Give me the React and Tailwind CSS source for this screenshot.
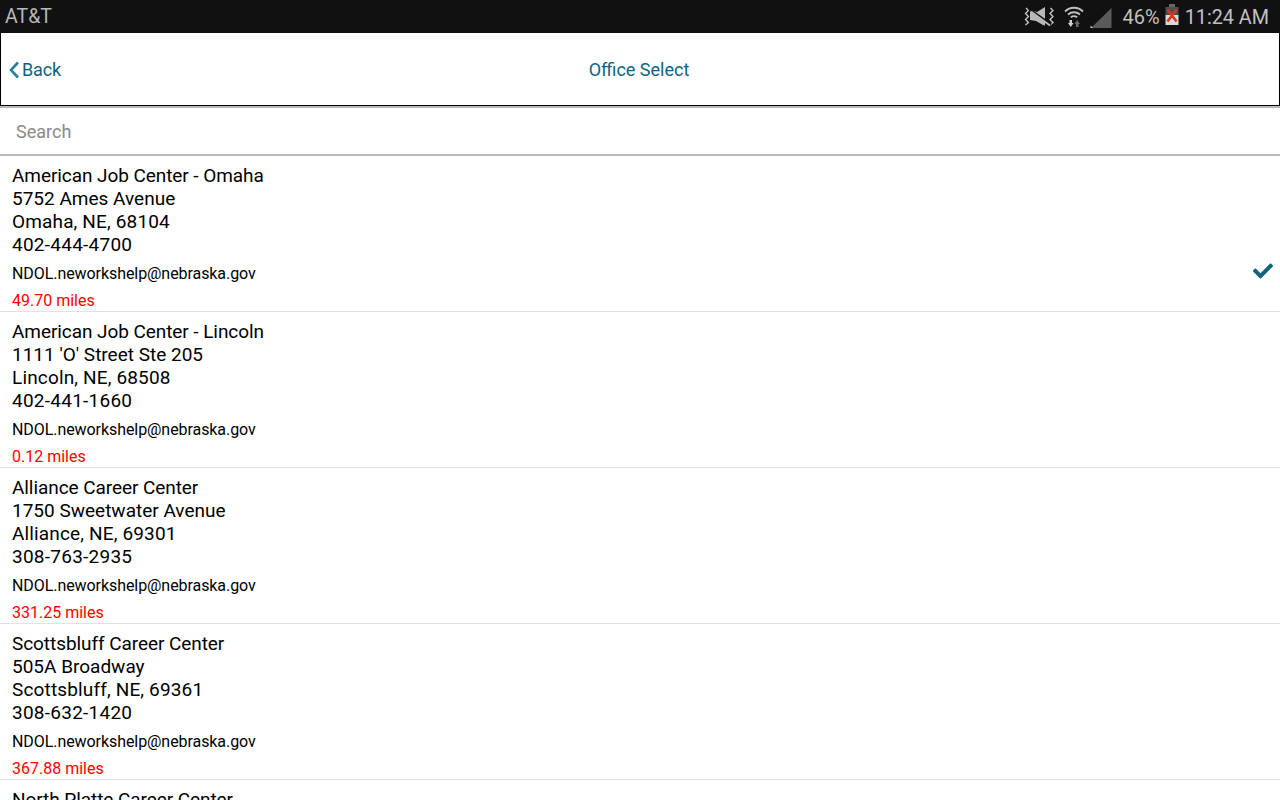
import React from 'react';
import { FaCheck } from 'react-icons/fa';

const offices = [
  { name: 'American Job Center - Omaha', street: '5752 Ames Avenue', city: 'Omaha, NE, 68104', phone: '402-444-4700', miles: '49.70 miles', selected: true },
  { name: 'American Job Center - Lincoln', street: "1111 'O' Street Ste 205", city: 'Lincoln, NE, 68508', phone: '402-441-1660', miles: '0.12 miles' },
  { name: 'Alliance Career Center', street: '1750 Sweetwater Avenue', city: 'Alliance, NE, 69301', phone: '308-763-2935', miles: '331.25 miles' },
  { name: 'Scottsbluff Career Center', street: '505A Broadway', city: 'Scottsbluff, NE, 69361', phone: '308-632-1420', miles: '367.88 miles' },
  { name: 'North Platte Career Center', street: '306 East 3rd Street', city: 'North Platte, NE, 69101', phone: '308-535-8320', miles: '223.40 miles' },
];

const StatusIcons = () => (
  <div className="flex items-center">
    {/* vibrate / mute */}
    <svg width="32" height="22" viewBox="0 0 32 22" className="shrink-0 mr-[9px]">
      <path d="M3 2l2.500 2.500-3 3 3 3-3 3 3 3-3 2.500" fill="none" stroke="#c8c8c8" strokeWidth="1.300" />
      <path d="M27.500 2l2.500 2.500-3 3 3 3-3 3 3 3-3 2.500" fill="none" stroke="#c8c8c8" strokeWidth="1.300" />
      <path d="M7 4l7 2 8-5v18.500l-2-.5-7-4-6-1z" fill="#b8b8b8" />
      <path d="M6 3l22 15.500" stroke="#111111" strokeWidth="2.200" />
      <path d="M8 5.500l19 14" stroke="#b8b8b8" strokeWidth="1.800" />
    </svg>
    {/* wifi */}
    <svg width="20" height="22" viewBox="0 0 20 22" className="shrink-0 mr-[6px] mt-[1px]">
      <path d="M1 5.500C6 0.500 14 0.500 19 5.500" fill="none" stroke="#c0c0c0" strokeWidth="1.800" />
      <path d="M4 8.500C7.500 5.500 12.500 5.500 16 8.500" fill="none" stroke="#c0c0c0" strokeWidth="1.800" />
      <path d="M6.800 11.300C8.800 9.800 11.200 9.800 13.200 11.300" fill="none" stroke="#c0c0c0" strokeWidth="1.800" />
      <path d="M5.500 14h2.500v3h1.500L6.800 21 4 17h1.500z" fill="#d0d0d0" />
      <path d="M12 21v-3h-1.500L13.200 14l2.800 4h-1.500v3z" fill="#6a6a6a" />
    </svg>
    {/* signal */}
    <svg width="22" height="20" viewBox="0 0 22 20" className="shrink-0 mr-[11px] mt-[3px]">
      <path d="M21.500 0v20H1z" fill="#5a5a5a" />
      <path d="M0.500 20v-2.500L3 20z" fill="#d0d0d0" />
    </svg>
    <span className="text-[20px] text-[#c0c0c0] mr-[5px]">46%</span>
    {/* battery */}
    <svg width="14" height="22" viewBox="0 0 14 22" className="shrink-0 mr-[6px] mb-[3px]">
      <rect x="4" y="0" width="6" height="3" fill="#666666" />
      <rect x="0.500" y="3" width="13" height="8" fill="#4f4f4f" />
      <rect x="0.500" y="11" width="13" height="10" fill="#d8d8d8" />
      <path d="M2.500 5.500l9 12M11.500 5.500l-9 12" stroke="#d9341c" strokeWidth="2.500" />
    </svg>
    <span className="text-[19.8px] text-[#c0c0c0] pt-[2px]">11:24 AM</span>
  </div>
);

const OfficeRow = ({ office }) => (
  <li className="relative h-[156px] border-b border-[#e2e2e2] pl-[12px] pt-[8px] text-black overflow-hidden">
    <div className="text-[19px] leading-[23px] tracking-[-0.07px]">{office.name}</div>
    <div className="text-[19px] leading-[23px]">{office.street}</div>
    <div className="text-[19px] leading-[23px] tracking-[0.15px]">{office.city}</div>
    <div className="text-[19px] leading-[23px] tracking-[0.25px]">{office.phone}</div>
    <div className="text-[16px] leading-[19px] mt-[8px] tracking-[-0.07px]">NDOL.neworkshelp@nebraska.gov</div>
    <div className="text-[16px] leading-[19px] mt-[8px] text-[#ff0000]">{office.miles}</div>
    {office.selected && (
      <FaCheck className="absolute right-[7px] top-[105px] text-[#0f6480]" size={20} />
    )}
  </li>
);

const App = () => {
  return (
    <div className="w-[1280px] h-[800px] overflow-hidden bg-white font-['Roboto',sans-serif]">
      <div className="h-[33px] bg-[#111111] flex items-center justify-between pl-[5px] pr-[11px]">
        <span className="text-[19.5px] text-[#b8b8b8]">AT&amp;T</span>
        <StatusIcons />
      </div>

      <div className="h-[73px] border-x border-b border-black flex items-center relative pt-[1px]">
        <button className="flex items-center pl-[8px] text-[#0f6480] text-[18px] tracking-[-0.15px]">
          <svg width="11" height="18" viewBox="0 0 11 18" className="shrink-0 mr-[2px]">
            <path d="M9 1.500L2 9l7 7.500" fill="none" stroke="#2b7f9c" strokeWidth="2.600" />
          </svg>
          <span>Back</span>
        </button>
        <div className="absolute inset-x-0 pr-[2px] text-center text-[#0f6480] text-[18px]">Office Select</div>
      </div>

      <div className="h-[50px] border-t-2 border-b-2 border-[#b9b9b9] flex items-center pl-[16px]">
        <span className="text-[18px] text-[#8a8a8a]">Search</span>
      </div>

      <ul>
        {offices.map((office) => (
          <OfficeRow key={office.name} office={office} />
        ))}
      </ul>
    </div>
  );
};

export default App;
